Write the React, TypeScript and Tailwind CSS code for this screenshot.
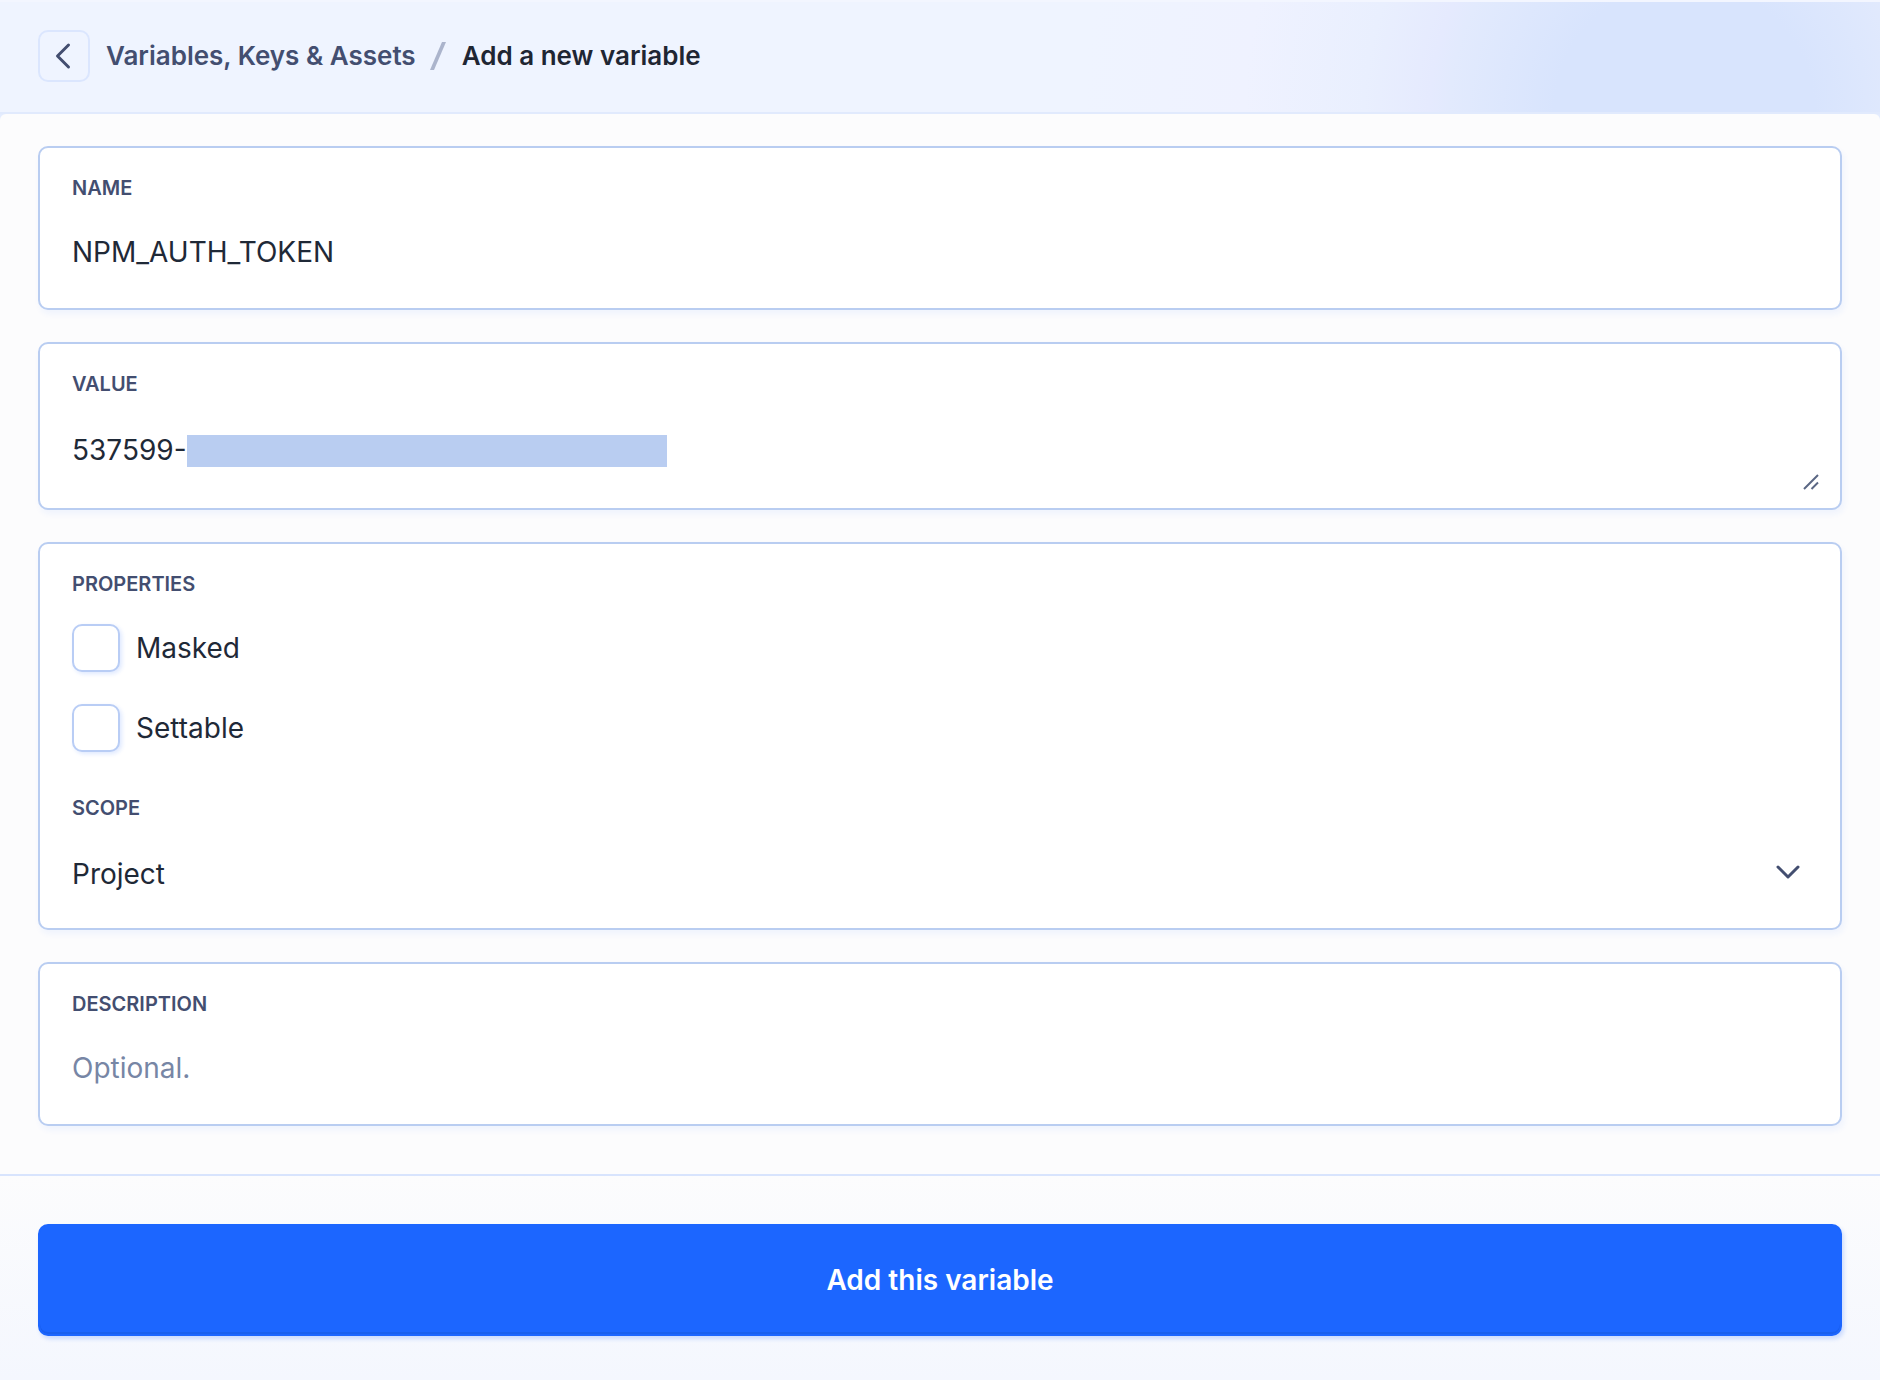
import { useState } from "react";
import type { ReactNode } from "react";

const labelClass = "block text-xl leading-7 font-semibold text-[#434e70]";
const fieldClass =
  "block w-full bg-transparent py-8 text-[28px] leading-9 text-[#1f2937] placeholder:text-[#7786a5] focus:outline-none";

function Card({ children }: { children: ReactNode }) {
  return (
    <div className="rounded-[10px] border-2 border-[#b9cdf1] bg-white px-8 pt-[26px] shadow-[2px_4px_6px_rgba(28,101,255,0.06)]">
      {children}
    </div>
  );
}

function CheckOption({ id, label }: { id: string; label: string }) {
  return (
    <div className="flex items-center gap-4">
      <input
        id={id}
        type="checkbox"
        className="size-12 appearance-none rounded-[10px] border-2 border-[#b9cdf5] bg-white shadow-[2px_2px_4px_rgba(28,101,255,0.14)] checked:bg-[#1c66ff]"
      />
      <label htmlFor={id} className="text-[28px] leading-9 text-[#1f2937]">
        {label}
      </label>
    </div>
  );
}

export default function App() {
  const [name, setName] = useState("NPM_AUTH_TOKEN");
  const [value, setValue] = useState("537599-");

  return (
    <div className="flex min-h-screen flex-col bg-[#e4ecfe] font-['Inter',sans-serif]">
      <header className="border-t-2 border-b-2 border-t-[#f3f6ff] border-b-[#e1eafd] bg-[radial-gradient(circle_at_89.6%_100%,#d8e4fd_130px,#e2eafd_235px,#e5eafe_255px,#e9effe_320px,#eff2ff_440px,#eff4ff_600px)] px-[38px] pt-7 pb-[30px]">
        <nav aria-label="Breadcrumb" className="flex items-center text-[26px] leading-8">
          <button
            type="button"
            aria-label="Back"
            className="flex size-[52px] items-center justify-center rounded-[10px] border-2 border-[#dbe6fe] text-[#434e70]"
          >
            <svg width="18" height="28" viewBox="0 0 18 28" fill="none" stroke="currentColor" strokeWidth="3" strokeLinecap="round" strokeLinejoin="round">
              <path d="M13.5 3 L2.5 14 L13.5 25" />
            </svg>
          </button>
          <a href="#variables" className="ml-4 font-semibold text-[#434e70]">
            Variables, Keys &amp; Assets
          </a>
          <svg className="mr-4 ml-3.5" width="16" height="28" viewBox="0 0 16 28" fill="#abb4cc" aria-hidden="true">
            <path d="M12 0 H16 L4 28 H0 Z" />
          </svg>
          <h1 className="font-semibold text-[#1f2633]">Add a new variable</h1>
        </nav>
      </header>

      <form className="flex flex-1 flex-col rounded-t-md bg-[#fcfcfd]" onSubmit={(e) => e.preventDefault()}>
        <div className="flex flex-col gap-8 px-[38px] pt-8 pb-12">
          <Card>
            <div className="pb-1.5">
              <label htmlFor="name" className={labelClass}>NAME</label>
              <input id="name" type="text" value={name} onChange={(e) => setName(e.target.value)} className={fieldClass} />
            </div>
          </Card>

          <Card>
            <div className="pb-2">
              <label htmlFor="value" className={labelClass}>VALUE</label>
              <div className="relative mt-0.5">
                <textarea
                  id="value"
                  rows={1}
                  value={value}
                  onChange={(e) => setValue(e.target.value)}
                  className={`${fieldClass} resize-none overflow-hidden`}
                />
                <span className="pointer-events-none absolute top-[35px] left-[115px] h-8 w-[480px] bg-[#b9cdf1]" />
                <svg className="pointer-events-none absolute right-[-11px] bottom-2.5" width="16" height="16" viewBox="0 0 16 16" fill="none" stroke="#5b6784" strokeWidth="2" aria-hidden="true">
                  <path d="M1 15 L15 1 M8.5 15 L15 8.5" />
                </svg>
              </div>
            </div>
          </Card>

          <Card>
            <fieldset>
              <legend className={labelClass}>PROPERTIES</legend>
              <div className="mt-[26px] flex flex-col gap-8">
                <CheckOption id="masked" label="Masked" />
                <CheckOption id="settable" label="Settable" />
              </div>
            </fieldset>
            <div className="mt-[42px] pb-1">
              <label htmlFor="scope" className={labelClass}>SCOPE</label>
              <div className="relative mt-0.5">
                <select id="scope" defaultValue="Project" className={`${fieldClass} appearance-none`}>
                  <option>Project</option>
                  <option>Environment</option>
                </select>
                <svg className="pointer-events-none absolute top-10 right-1.5" width="28" height="18" viewBox="0 0 28 18" fill="none" stroke="#434e70" strokeWidth="3" strokeLinecap="round" strokeLinejoin="round" aria-hidden="true">
                  <path d="M4 3 L14 13 L24 3" />
                </svg>
              </div>
            </div>
          </Card>

          <Card>
            <div className="pb-1.5">
              <label htmlFor="description" className={labelClass}>DESCRIPTION</label>
              <input id="description" type="text" placeholder="Optional." className={fieldClass} />
            </div>
          </Card>
        </div>

        <footer className="flex-1 border-t-2 border-[#d8e4fd] bg-linear-to-b from-[#fcfcfd] to-[#f4f7fe] px-[38px] pt-12 pb-11">
          <button
            type="submit"
            className="block w-full rounded-[10px] border-2 border-[#1c66ff] bg-[#1c66ff] py-9 text-[28px] leading-9 font-semibold text-white shadow-[inset_0_-2px_0_#195fee,2px_3px_4px_rgba(28,101,255,0.2)]"
          >
            Add this variable
          </button>
        </footer>
      </form>
    </div>
  );
}
